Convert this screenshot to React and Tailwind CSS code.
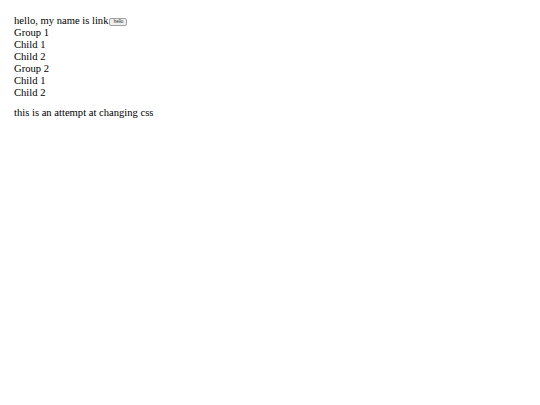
export default function App() {
  return (
    <div className="min-h-[405px] bg-white px-[14px] pt-[15px] text-[10.6px] leading-[12px] text-black [font-family:'Liberation_Serif',serif]">
      <div className="flex items-end">
        <span>hello, my name is link</span>
        <button className="mb-px ml-px h-[8px] w-[18px] rounded-[2px] border border-[#a0a0a0] bg-[#efefef] text-[4.5px] leading-[6px] text-[#222] [font-family:'Liberation_Sans',sans-serif]">
          hello
        </button>
      </div>
      <div>
        <div>Group 1</div>
        <div>Child 1</div>
        <div>Child 2</div>
      </div>
      <div>
        <div>Group 2</div>
        <div>Child 1</div>
        <div>Child 2</div>
      </div>
      <p className="mt-[8px]">this is an attempt at changing css</p>
    </div>
  )
}
